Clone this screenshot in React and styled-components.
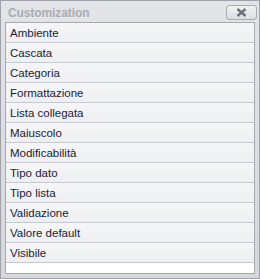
import styled, { createGlobalStyle } from "styled-components";

const items = [
    "Ambiente",
    "Cascata",
    "Categoria",
    "Formattazione",
    "Lista collegata",
    "Maiuscolo",
    "Modificabilità",
    "Tipo dato",
    "Tipo lista",
    "Validazione",
    "Valore default",
    "Visibile",
];

export default function App() {
    return (
        <>
            <GlobalStyle />
            <Window>
                <TitleBar>
                    <Title>Customization</Title>
                    <CloseButton>
                        <svg width="11" height="9" viewBox="0 0 11 9">
                            <path d="M1.5 1 L9.5 8 M9.5 1 L1.5 8" stroke="#6f707b" strokeWidth="2.4" />
                        </svg>
                    </CloseButton>
                </TitleBar>
                <List>
                    {items.map(item => (
                        <Row key={item}>{item}</Row>
                    ))}
                    <Filler />
                </List>
            </Window>
        </>
    );
}

const GlobalStyle = createGlobalStyle`
    html, body {
        margin: 0;
        padding: 0;
        background: #ffffff;
    }
`;

const Window = styled.div`
    width: 260px;
    height: 279px;
    box-sizing: border-box;
    border: 1px solid #9fa0a8;
    background: linear-gradient(#e3e4e8, #d6d7dc);
    padding: 0 4px 4px 4px;

    display: flex;
    flex-direction: column;
`;

const TitleBar = styled.div`
    height: 21px;
    display: flex;
    align-items: center;
    justify-content: space-between;
    padding: 0 0 0 3px;
`;

const Title = styled.div`
    font-family: "Liberation Sans", Arial, sans-serif;
    font-size: 12px;
    font-weight: 700;
    letter-spacing: -0.1px;
    color: #abadb5;
    margin-top: 2px;
`;

const CloseButton = styled.div`
    width: 31px;
    height: 15px;
    box-sizing: border-box;
    margin-top: 1px;
    margin-right: -2px;
    border: 1px solid #a9aab2;
    border-radius: 3px;
    background: linear-gradient(#f2f2f4, #dcdde1);

    display: flex;
    align-items: center;
    justify-content: center;
`;

const List = styled.div`
    flex: 1;
    box-sizing: border-box;
    border: 1px solid #a7a8b0;
    background: #ffffff;
    display: flex;
    flex-direction: column;
`;

const Row = styled.div`
    height: 20px;
    box-sizing: border-box;
    border-bottom: 1px solid #c8c9cf;
    background: linear-gradient(#f6f6f8, #eeeff2);
    padding-left: 4px;

    display: flex;
    align-items: center;
    font-family: "Liberation Sans", Arial, sans-serif;
    font-size: 11.5px;
    color: #1a1a38;
`;

const Filler = styled.div`
    flex: 1;
    background: #ffffff;
`;
